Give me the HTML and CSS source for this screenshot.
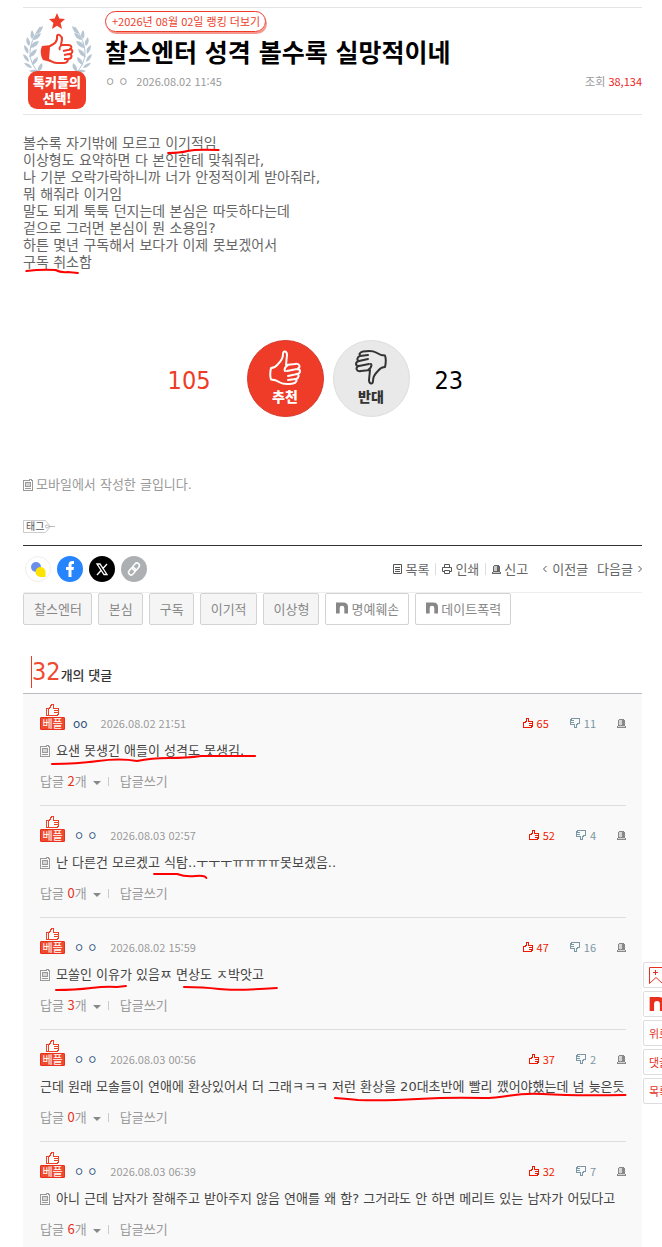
FILE: index.html
```html
<!DOCTYPE html>
<html lang="ko">
<head>
  <meta charset="UTF-8" />
  <meta name="viewport" content="width=device-width, initial-scale=1.0"/>
  <title>찰스엔터 성격 볼수록 실망적이네</title>
  <link rel="stylesheet" href="styles.css">
</head>
<body>

<!-- icons -->
<svg class="sprite" width="0" height="0" aria-hidden="true">
  <symbol id="thumb" viewBox="0 0 10 10">
    <path d="M3 9.500H.5v-5h2v-1h1v-3h2v3h4v5h-1v1H3M6 5.500h3M6 7.500h3" fill="none" stroke="currentColor" shape-rendering="crispEdges"/>
  </symbol>
  <symbol id="best" viewBox="0 0 13 12">
    <path d="M.5 4.500h2v7h-2zM2.500 4.500h1v-1h1v-2h1v-1h2v4h5v6h-1v1h-9M8 6.500h4M8 8.500h4" fill="#fff" stroke="#ee4126" shape-rendering="crispEdges"/>
  </symbol>
  <symbol id="hand" viewBox="0 0 34 37">
    <path d="M3 19c5 0 6-3 8-5 3-3 4-5 4-9 0-4 4-3 4 1l-1 10 9-1c5-1 6 4 2 5l-10 2M29 20c4 0 4 4 0 5l-9 2M28 25c4 0 3 4 0 5l-8 1M27 30c3 1 1 4-2 4.500-6 1-10 1-13-1-3-2-6-3-9-3-1-3-1-7 0-11.500M20 16c-3 2-4 4-3 6" fill="none" stroke="currentColor" stroke-width="2" stroke-linejoin="round" stroke-linecap="round"/>
  </symbol>
  <symbol id="mobile" viewBox="0 0 10 12">
    <path d="M.5 1.500h6v-1h2v1h1v10h-9z" fill="none" stroke="#999" shape-rendering="crispEdges"/>
    <path d="M2.500 3.500h5v4h-5zM2 9.500h6" fill="#d4d4d4" stroke="#999" shape-rendering="crispEdges"/>
  </symbol>
  <symbol id="siren" viewBox="0 0 9 9">
    <path d="M1 7V1h1V0h5v1h1v6h1v2H0V7z" fill="currentColor"/>
    <path d="M2 1h3v5H2zM1 7h7v1H1z" fill="#fff" opacity=".65"/>
  </symbol>
  <symbol id="nate" viewBox="0 0 13 12">
    <path d="M0 0h8q5 0 5 5v7H9V6Q9 3.500 6.500 3.500T4 6v6H0z" fill="currentColor"/>
  </symbol>
</svg>

<div class="wrap">

  <header class="post-head">
    <svg class="emblem" viewBox="0 0 70 98" role="img">
      <path d="M34 0l2.300 5.500 5.700.4-4.400 4 1.400 6L34 12.700 29 16l1.400-6L26 6l5.700-.5z" fill="#ee3c28"/>
      <g id="laurel" fill="#b7c6d2">
        <path d="M20 13q-6 2-7 8 6-1 7-8zM9 17q-3 5 0 9 4-4 0-9zM18 20q-7 1-8 7 6 0 8-7zM4 24q-2 6 2 9 3-4-2-9zM16 28q-7 0-9 7 7 0 9-7zM1 32q0 6 4 9 2-6-4-9zM14 36q-6 1-8 8 7-1 8-8zM0 41q1 6 6 8 0-6-6-8zM15 44q-6 2-6 8 6-2 6-8zM1 50q3 5 8 5-2-5-8-5zM19 50q-5 3-4 9 6-3 4-9zM6 58q4 3 11 1-5-4-11-1z"/>
        <path d="M17 14Q-3 42 17 61" fill="none" stroke="#b7c6d2"/>
      </g>
      <use href="#laurel" transform="matrix(-1 0 0 1 69 0)"/>
      <path d="M19 33l9-1 6 3v12l-6 2-8-2q-4-7-1-14z" fill="#ee3c28"/>
      <path d="M27 34c4-2 8-4 7-10 1-3 5 0 5 3l-1 5h7c5 0 4 4 1 5 5-1 5 3 2 5 2 0 1 4-2 4 1 3-1 4-4 4h-8c-4 0-6-2-8-3z" fill="#fff"/>
      <path d="M27 33c4-2 8-4 7-10 1-3 5 0 5 3l-1 6h7c5 0 4 5 0 5l-5 1M46 36c5 0 4 5 0 5l-5 1M46 41c4 0 3 5-1 5h-4M44 46c2 1 0 4-3 4h-7c-4 0-6-2-8-3M39 32c-3 2-3 3-2 5" fill="none" stroke="#ee3c28" stroke-width="2" stroke-linejoin="round"/>
      <rect x="5" y="58" width="58" height="38" rx="9" fill="#ee3c28"/>
      <text x="34" y="74" class="emblem-text">톡커들의</text>
      <text x="34" y="90" class="emblem-text">선택!</text>
    </svg>
    <div class="head-text">
      <a class="ranking" href="#">+2026년 08월 02일 랭킹 더보기</a>
      <h1>찰스엔터 성격 볼수록 실망적이네</h1>
      <div class="meta">
        <span class="writer">ㅇ ㅇ</span>
        <span>2026.08.02 11:45</span>
        <span class="views">조회 <b>38,134</b></span>
      </div>
    </div>
  </header>

  <div class="post-body">
    볼수록 자기밖에 모르고 <span class="mark">이기적임<svg viewBox="0 0 50 6" preserveAspectRatio="none"><path d="M3 5Q14 5 22 3T52 2"/></svg></span><br>
    이상형도 요약하면 다 본인한테 맞춰줘라,<br>
    나 기분 오락가락하니까 너가 안정적이게 받아줘라,<br>
    뭐 해줘라 이거임<br>
    말도 되게 툭툭 던지는데 본심은 따듯하다는데<br>
    겉으로 그러면 본심이 뭔 소용임?<br>
    하튼 몇년 구독해서 보다가 이제 못보겠어서<br>
    <span class="mark">구독 취소<svg viewBox="0 0 50 6" preserveAspectRatio="none"><path d="M3 4Q17 2 29 3Q34 6 40 5L49 6"/></svg></span>함
  </div>

  <div class="vote">
    <span class="count up">105</span>
    <button class="vote-btn good"><svg width="34" height="37"><use href="#hand"/></svg>추천</button>
    <button class="vote-btn bad"><svg class="flip" width="34" height="37"><use href="#hand"/></svg>반대</button>
    <span class="count">23</span>
  </div>

  <p class="mobile-note"><svg width="10" height="12"><use href="#mobile"/></svg>모바일에서 작성한 글입니다.</p>

  <div class="tag-label">
    <svg width="32" height="13" viewBox="0 0 32 13">
      <path d="M.5.500h22l5 6-5 6H.5z" fill="#fff" stroke="#ccc"/>
      <path d="M25 6.500h7" stroke="#bbb"/><circle cx="24" cy="6.500" r="1.500" fill="#fff" stroke="#bbb"/>
      <text x="3" y="10">태그</text>
    </svg>
  </div>

  <div class="tools">
    <div class="share">
      <a href="#" aria-label="네이트온"><svg viewBox="0 0 26 26"><circle cx="13" cy="13" r="12.500" fill="#fff" stroke="#eee"/><circle cx="11" cy="11" r="5" fill="#6c8eea"/><path d="M15.500 11a5 5 0 0 1 5 5v5h-5a5 5 0 0 1 0-10z" fill="#ffe300"/></svg></a>
      <a href="#" aria-label="페이스북"><svg viewBox="0 0 26 26"><circle cx="13" cy="13" r="13" fill="#2684fc"/><path d="M11.500 21v-7H9v-3h2.500V9q0-4 4-4H17v3h-1.500q-1 0-1 1v2H17l-.5 3h-2v7z" fill="#fff"/></svg></a>
      <a href="#" aria-label="엑스"><svg viewBox="0 0 26 26"><circle cx="13" cy="13" r="13"/><path d="M8 8h3l7 10.500h-3zM18 8l-4.500 5M12 14.500L8 19" fill="none" stroke="#fff" stroke-width="1.300"/></svg></a>
      <a href="#" aria-label="주소 복사"><svg viewBox="0 0 26 26"><circle cx="13" cy="13" r="13" fill="#adb0b3"/><g fill="none" stroke="#fff" stroke-width="1.500" transform="rotate(-50 13 13)"><rect x="6" y="10.500" width="8" height="5" rx="2.500"/><rect x="12" y="10.500" width="8" height="5" rx="2.500"/></g></svg></a>
    </div>
    <nav class="menu">
      <a href="#"><svg width="9" height="10" viewBox="0 0 9 10"><path d="M.5.500h8v9h-8zM2 3.500h5M2 5.500h5M2 7.500h5" fill="none" stroke="#555"/></svg>목록</a>
      <a href="#" class="bar"><svg width="10" height="10" viewBox="0 0 10 10"><path d="M2.500 3.500v-3h5v3M2 7.500H.5v-4h9v4H8M2.500 6.500h5v3h-5z" fill="none" stroke="#555"/></svg>인쇄</a>
      <a href="#" class="bar"><svg width="9" height="9"><use href="#siren"/></svg>신고</a>
      <a href="#" class="prev"><svg width="4" height="8" viewBox="0 0 4 8"><path d="M3.500 1L.5 4l3 3" fill="none" stroke="#555"/></svg>이전글</a>
      <a href="#" class="next">다음글<svg width="4" height="8" viewBox="0 0 4 8"><path d="M.5 1l3 3-3 3" fill="none" stroke="#555"/></svg></a>
    </nav>
  </div>

  <div class="tags">
    <a href="#">찰스엔터</a>
    <a href="#">본심</a>
    <a href="#">구독</a>
    <a href="#">이기적</a>
    <a href="#">이상형</a>
    <a href="#" class="nate"><svg width="12" height="12"><use href="#nate"/></svg>명예훼손</a>
    <a href="#" class="nate"><svg width="12" height="12"><use href="#nate"/></svg>데이트폭력</a>
  </div>

  <h2 class="cmt-title"><span class="num">32</span>개의 댓글</h2>

  <div class="cmt-list">

    <div class="cmt">
      <div class="cmt-head">
        <span class="best"><svg width="13" height="12"><use href="#best"/></svg><i>베플</i></span>
        <span class="nick latin">oo</span><span class="date">2026.08.02 21:51</span>
        <div class="acts">
          <button class="like"><svg width="10" height="10"><use href="#thumb"/></svg>65</button>
          <button class="dislike"><svg class="flip" width="10" height="10"><use href="#thumb"/></svg>11</button>
          <button class="report" aria-label="신고"><svg width="9" height="9"><use href="#siren"/></svg></button>
        </div>
      </div>
      <p class="cmt-text"><svg class="mob" width="10" height="12"><use href="#mobile"/></svg><span class="mark wide">요샌 못생긴 애들이 성격도 못생김.<svg viewBox="0 0 188 10" preserveAspectRatio="none"><path d="M-4 9Q20 9 42 6T81 6Q95 3 113 3T145 1H199"/></svg></span></p>
      <div class="reply"><a href="#">답글 <b>2</b>개</a><i></i><a href="#" class="write">답글쓰기</a></div>
    </div>

    <div class="cmt">
      <div class="cmt-head">
        <span class="best"><svg width="13" height="12"><use href="#best"/></svg><i>베플</i></span>
        <span class="nick">ㅇ ㅇ</span><span class="date">2026.08.03 02:57</span>
        <div class="acts">
          <button class="like"><svg width="10" height="10"><use href="#thumb"/></svg>52</button>
          <button class="dislike"><svg class="flip" width="10" height="10"><use href="#thumb"/></svg>4</button>
          <button class="report" aria-label="신고"><svg width="9" height="9"><use href="#siren"/></svg></button>
        </div>
      </div>
      <p class="cmt-text"><svg class="mob" width="10" height="12"><use href="#mobile"/></svg>난 다른건 모르겠<span class="mark low">고 식탐..<svg viewBox="0 0 48 6" preserveAspectRatio="none"><path d="M6 1H29Q37 4 47 3T58 5"/></svg></span>ㅜㅜㅜㅠㅠㅠㅠ못보겠음..</p>
      <div class="reply"><a href="#">답글 <b>0</b>개</a><i></i><a href="#" class="write">답글쓰기</a></div>
    </div>

    <div class="cmt">
      <div class="cmt-head">
        <span class="best"><svg width="13" height="12"><use href="#best"/></svg><i>베플</i></span>
        <span class="nick">ㅇ ㅇ</span><span class="date">2026.08.02 15:59</span>
        <div class="acts">
          <button class="like"><svg width="10" height="10"><use href="#thumb"/></svg>47</button>
          <button class="dislike"><svg class="flip" width="10" height="10"><use href="#thumb"/></svg>16</button>
          <button class="report" aria-label="신고"><svg width="9" height="9"><use href="#siren"/></svg></button>
        </div>
      </div>
      <p class="cmt-text"><svg class="mob" width="10" height="12"><use href="#mobile"/></svg><span class="mark low">모쏠인 이유<svg viewBox="0 0 64 6" preserveAspectRatio="none"><path d="M0 5Q19 5 35 3T61 2L70 1"/></svg></span>가 있음ㅉ <span class="mark low">면상도 ㅈ박앗고<svg viewBox="0 0 88 6" preserveAspectRatio="none"><path d="M8 2Q27 2 43 4T101 3"/></svg></span></p>
      <div class="reply"><a href="#">답글 <b>3</b>개</a><i></i><a href="#" class="write">답글쓰기</a></div>
    </div>

    <div class="cmt">
      <div class="cmt-head">
        <span class="best"><svg width="13" height="12"><use href="#best"/></svg><i>베플</i></span>
        <span class="nick">ㅇ ㅇ</span><span class="date">2026.08.03 00:56</span>
        <div class="acts">
          <button class="like"><svg width="10" height="10"><use href="#thumb"/></svg>37</button>
          <button class="dislike"><svg class="flip" width="10" height="10"><use href="#thumb"/></svg>2</button>
          <button class="report" aria-label="신고"><svg width="9" height="9"><use href="#siren"/></svg></button>
        </div>
      </div>
      <p class="cmt-text">근데 원래 모솔들이 연애에 환상있어서 더 그래ㅋㅋㅋ <span class="mark wide">저런 환상을 20대초반에 빨리 깼어야했는데 넘 늦은듯<svg viewBox="0 0 294 10" preserveAspectRatio="none"><path d="M3 7Q17 8 26 9Q52 10 86 8T152 7C178 7 182 1 212 3Q242 5 295 4"/></svg></span></p>
      <div class="reply"><a href="#">답글 <b>0</b>개</a><i></i><a href="#" class="write">답글쓰기</a></div>
    </div>

    <div class="cmt">
      <div class="cmt-head">
        <span class="best"><svg width="13" height="12"><use href="#best"/></svg><i>베플</i></span>
        <span class="nick">ㅇ ㅇ</span><span class="date">2026.08.03 06:39</span>
        <div class="acts">
          <button class="like"><svg width="10" height="10"><use href="#thumb"/></svg>32</button>
          <button class="dislike"><svg class="flip" width="10" height="10"><use href="#thumb"/></svg>7</button>
          <button class="report" aria-label="신고"><svg width="9" height="9"><use href="#siren"/></svg></button>
        </div>
      </div>
      <p class="cmt-text"><svg class="mob" width="10" height="12"><use href="#mobile"/></svg>아니 근데 남자가 잘해주고 받아주지 않음 연애를 왜 함? 그거라도 안 하면 메리트 있는 남자가 어딨다고</p>
      <div class="reply"><a href="#">답글 <b>6</b>개</a><i></i><a href="#" class="write">답글쓰기</a></div>
    </div>

  </div>

  <!-- quick menu on the right edge -->
  <div class="quick">
    <a href="#" aria-label="스크랩"><svg width="14" height="17" viewBox="0 0 14 17"><path d="M.5.500h13v16l-6.500-6-6.500 6zM4 5.500h5M6.500 3v5" fill="none" stroke="#e8301c"/></svg></a>
    <a href="#" aria-label="네이트"><svg width="16" height="14" viewBox="0 0 13 12"><use href="#nate"/></svg></a>
    <a href="#">위로</a>
    <a href="#">댓글</a>
    <a href="#">목록</a>
  </div>

</div>
</body>
</html>
```
FILE: styles.css
```css
* { box-sizing: border-box; }
body { margin: 0; background: #fff; color: #666; font-family: "Noto Sans CJK KR", sans-serif; font-size: 13px; overflow-x: hidden; }
a { color: inherit; text-decoration: none; }
button { font-family: inherit; border: none; padding: 0; background: none; cursor: pointer; }
svg { flex: none; }
.sprite { position: absolute; }
.flip { transform: rotate(180deg); }
.wrap { position: relative; margin: 0 20px 0 23px; padding-top: 7px; }

/* title */
.post-head { display: flex; gap: 12px; height: 108px; border-top: 1px solid #e5e5e5; border-bottom: 1px solid #e5e5e5; }
.emblem { width: 70px; height: 98px; margin-top: 5px; }
.emblem-text { font-size: 13px; font-weight: 900; fill: #fff; text-anchor: middle; }
.head-text { flex: 1; padding-top: 3px; }
.ranking { display: inline-block; height: 21px; line-height: 19px; padding: 0 5px 0 6px; border: 1px solid #ee3c28; border-radius: 11px; box-shadow: 1px 2px 0 #f5978c; color: #ee3c28; font-size: 11px; vertical-align: top; }
h1 { margin: 3px 0 0 0; font-family: "DejaVu Sans Condensed", "Noto Sans CJK KR", sans-serif; font-size: 25px; line-height: 38px; color: #000; }
.meta { display: flex; gap: 8px; margin-top: 0; font-size: 11px; line-height: 16px; color: #999; }
.views { margin-left: auto; }
.views b { font-weight: normal; color: #ee1c1c; }

/* body */
.post-body { margin-top: 20px; font-family: "DejaVu Sans", "Noto Sans CJK KR", sans-serif; font-size: 14px; line-height: 17px; }
.mark { position: relative; }
.mark svg { position: absolute; left: 0; bottom: -3px; width: 100%; height: 6px; overflow: visible; }
.mark path { fill: none; stroke: #f00; stroke-width: 2; stroke-linecap: round; vector-effect: non-scaling-stroke; }
.mark.wide svg { height: 10px; bottom: -7px; }
.mark.low svg { bottom: -9px; }

.vote { display: flex; align-items: center; justify-content: center; margin-top: 69px; }
.count { width: 80px; font-family: "DejaVu Sans Condensed", "DejaVu Sans", sans-serif; font-size: 25px; color: #000; padding-top: 4px; }
.count.up { width: 60px; text-align: right; color: #ee3c28; }
.vote-btn { display: flex; flex-direction: column; align-items: center; width: 77px; height: 77px; padding-top: 8px; border-radius: 50%; font-size: 14px; line-height: 20px; font-weight: 900; }
.good { margin: 0 9px 0 36px; background: #ee3c28; border: 1px solid #d5392a; color: #fff; }
.bad { margin-right: 25px; background: #e9e9e9; border: 1px solid #ddd; color: #333; }

.mobile-note { display: flex; align-items: center; gap: 3px; margin: 58px 0 0; font-family: "DejaVu Sans", "Noto Sans CJK KR", sans-serif; line-height: 20px; color: #999; }
.tag-label { height: 25px; margin-top: 25px; }
.tag-label svg { display: block; overflow: visible; }
.tag-label text { font-size: 10px; fill: #555; }

/* share + menu */
.tools { display: flex; align-items: center; justify-content: space-between; height: 48px; border-top: 1px solid #333; border-bottom: 1px solid #eee; }
.share { display: flex; gap: 6px; padding-left: 2px; }
.share svg { display: block; width: 26px; height: 26px; }
.menu { display: flex; align-items: center; line-height: 20px; }
.menu a { display: flex; align-items: center; gap: 3px; }
.menu .bar::before { content: ""; width: 1px; height: 12px; margin: 0 3px 0 6px; background: #ddd; }
.menu .prev { margin-left: 15px; gap: 5px; }
.menu .next { margin-left: 9px; gap: 5px; }

.tags { display: flex; flex-wrap: wrap; gap: 6px; }
.tags a { display: flex; align-items: center; gap: 3px; height: 32px; padding: 0 9px 2px 10px; background: #f5f5f5; border: 1px solid #d3d3d3; border-radius: 2px; color: #888; }
.tags .nate { background: #fff; }

/* comments */
.cmt-title { display: flex; align-items: baseline; height: 32px; margin: 31px 0 0 8px; border-left: 1px solid #ee3c28; font-size: 13px; font-weight: 500; line-height: 32px; color: #333; }
.cmt-title .num { font-family: "DejaVu Sans Condensed", "DejaVu Sans", sans-serif; font-size: 25px; font-weight: normal; color: #ee4a30; }
.cmt-list { margin-top: 5px; padding: 0 16px 0 17px; background: #f9f9f9; border-top: 1px solid #b9bcc0; }
.cmt { height: 112px; padding-top: 9px; border-bottom: 1px solid #ddd; }
.cmt:last-child { height: auto; padding-bottom: 9px; border-bottom: none; }
.cmt-head { display: flex; align-items: flex-end; height: 27px; font-size: 11px; line-height: 14px; }
.best { display: flex; flex-direction: column; align-items: center; width: 25px; }
.best i { width: 25px; height: 13px; margin-top: 1px; background: #ee4a30; border: 1px solid #e8301c; border-radius: 1px; color: #fff; font-size: 11px; font-style: normal; line-height: 10px; text-align: center; }
.nick { margin-left: 9px; color: #35557f; }
.nick.latin { margin-left: 8px; font-size: 12px; }
.date { margin-left: 13px; color: #999; }
.acts { display: flex; gap: 21px; margin-left: auto; }
.acts button { display: flex; align-items: center; gap: 4px; font-size: 11px; line-height: 14px; }
.like { color: #f01800; }
.dislike { color: #7b97a3; }
.report { color: #888; }
.cmt-text { margin: 11px 0 0; font-family: "DejaVu Sans", "Noto Sans CJK KR", sans-serif; font-size: 13px; line-height: 20px; color: #444; white-space: nowrap; }
.mob { margin-right: 6px; vertical-align: -2px; }
.reply { display: flex; align-items: center; margin-top: 10px; line-height: 20px; color: #999; }
.reply b { font-weight: normal; color: #e8301c; }
.reply a:first-child::after { content: ""; display: inline-block; margin-left: 6px; border: 4px solid transparent; border-top-color: #888; border-bottom: none; vertical-align: 1px; }
.reply i { width: 1px; height: 9px; margin: 0 11px 0 7px; background: #ccc; }

.quick { position: absolute; left: calc(100% + 1px); top: 962px; display: flex; flex-direction: column; gap: 3px; }
.quick a { display: flex; align-items: center; width: 36px; height: 26px; padding-left: 5px; background: #fff; border: 1px solid #ddd; border-radius: 2px; color: #e8301c; font-size: 11px; white-space: nowrap; }
```
